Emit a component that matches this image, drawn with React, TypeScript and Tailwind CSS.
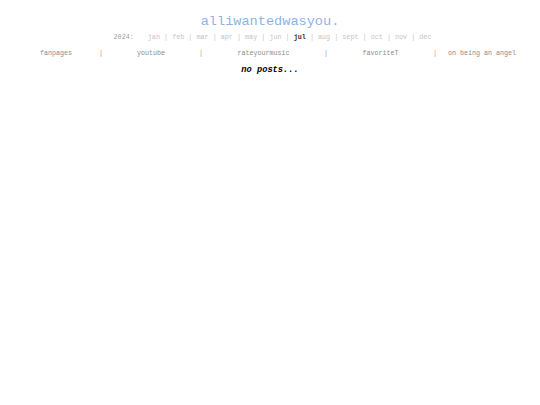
import React from "react";

const months = ["jan","feb","mar","apr","may","jun","jul","aug","sept","oct","nov","dec"];

export default function App() {
  return (
    <div className="w-[540px] h-[405px] bg-white antialiased" style={{ fontFamily: '"Liberation Mono", "Courier New", monospace' }}>
      <div className="pt-[14px] text-center text-[13.6px] leading-[16px] text-[#8cb4e6]">alliwantedwasyou.</div>
      <div className="mt-[3px] pl-[5px] text-center text-[6.75px] leading-[8px] text-[#c4c4c4] whitespace-pre">
        <span className="text-[#a0a0a0]">2024:</span>
        <span className="inline-block w-[14px]"></span>
        {months.map((m, i) => (
          <React.Fragment key={m}>
            {i > 0 && <span>{" | "}</span>}
            <span className={m === "jul" ? "font-bold text-[#333333]" : ""}>{m}</span>
          </React.Fragment>
        ))}
      </div>
      <div className="mt-[8px] flex text-[6.7px] leading-[8px] text-[#8c8c8c] pl-[16px]">
        <span className="w-[80px] text-center">fanpages</span>
        <span className="w-[10px] text-center text-[#a0a0a0]">|</span>
        <span className="w-[90px] text-center">youtube</span>
        <span className="w-[10px] text-center text-[#a0a0a0]">|</span>
        <span className="w-[115px] text-center">rateyourmusic</span>
        <span className="w-[10px] text-center text-[#a0a0a0]">|</span>
        <span className="w-[99px] text-center">favoriteT</span>
        <span className="w-[10px] text-center text-[#a0a0a0]">|</span>
        <span className="w-[84px] text-center">on being an angel</span>
      </div>
      <div className="mt-[8px] text-center text-[8.7px] leading-[10px] font-bold italic text-black">no posts...</div>
    </div>
  );
}
